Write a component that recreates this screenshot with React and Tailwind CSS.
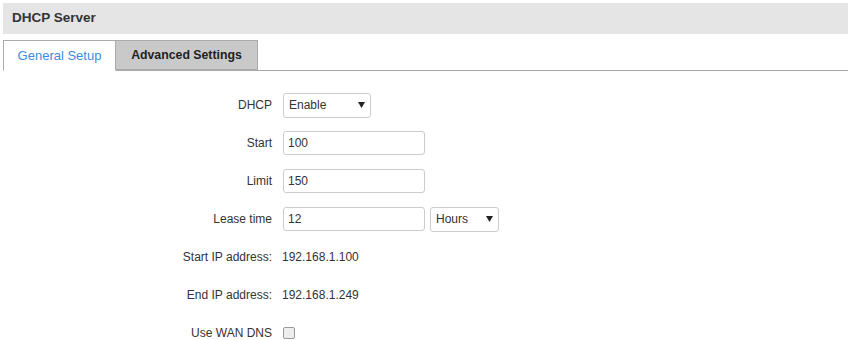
import { useState } from 'react'

const Caret = () => (
  <svg width="7" height="6" viewBox="0 0 7 6" className="absolute right-[5px] top-1/2 -translate-y-1/2 pointer-events-none">
    <path d="M0 0 L7 0 L3.5 6 Z" fill="#222" />
  </svg>
)

const Row = ({ label, children }) => (
  <div className="flex items-center h-[38px]">
    <div className="w-[269px] text-right pr-0 text-[12px] text-[#333]">{label}</div>
    <div className="ml-[11px] flex items-center">{children}</div>
  </div>
)

const Select = ({ value, width }) => (
  <div
    className="relative h-[25px] border border-[#ccc] rounded-[3px] bg-white flex items-center pl-[5px] text-[12px] text-[#333]"
    style={{ width }}
  >
    {value}
    <Caret />
  </div>
)

const Input = ({ value }) => (
  <input
    readOnly
    value={value}
    className="w-[142px] h-[24px] border border-[#ccc] rounded-[3px] px-[4px] text-[12px] text-[#333] outline-none"
  />
)

const App = () => {
  const [tab, setTab] = useState('general')
  return (
    <div className="w-[851px] h-[340px] bg-white p-[3px] overflow-hidden" style={{ fontFamily: '"Liberation Sans", Arial, sans-serif' }}>
      <div className="h-[31px] bg-[#e5e5e5] flex items-center pl-[9px] text-[13.5px] font-bold text-[#333]">
        DHCP Server
      </div>

      <div className="mt-[6px] flex items-end h-[31px] border-b border-[#aaa]">
        <button
          onClick={() => setTab('general')}
          className="h-[31px] -mb-px w-[113px] border border-[#aaa] border-b-white bg-white text-[13px] text-[#3b8de0]"
        >
          General Setup
        </button>
        <button
          onClick={() => setTab('advanced')}
          className="h-[30px] w-[142px] border border-l-0 border-[#aaa] bg-[#c9c9c9] text-[12.3px] font-bold text-[#222]"
        >
          Advanced Settings
        </button>
      </div>

      <div className="pt-[15px]">
        <Row label="DHCP">
          <Select value="Enable" width={88} />
        </Row>
        <Row label="Start">
          <Input value="100" />
        </Row>
        <Row label="Limit">
          <Input value="150" />
        </Row>
        <Row label="Lease time">
          <Input value="12" />
          <div className="ml-[5px]">
            <Select value="Hours" width={69} />
          </div>
        </Row>
        <Row label="Start IP address:">
          <span className="text-[12px] text-[#333] -ml-[1px]">192.168.1.100</span>
        </Row>
        <Row label="End IP address:">
          <span className="text-[12px] text-[#333] -ml-[1px]">192.168.1.249</span>
        </Row>
        <Row label="Use WAN DNS">
          <div className="w-[12px] h-[12px] border border-[#999] rounded-[2px] bg-[#eee]" />
        </Row>
      </div>
    </div>
  )
}

export default App
